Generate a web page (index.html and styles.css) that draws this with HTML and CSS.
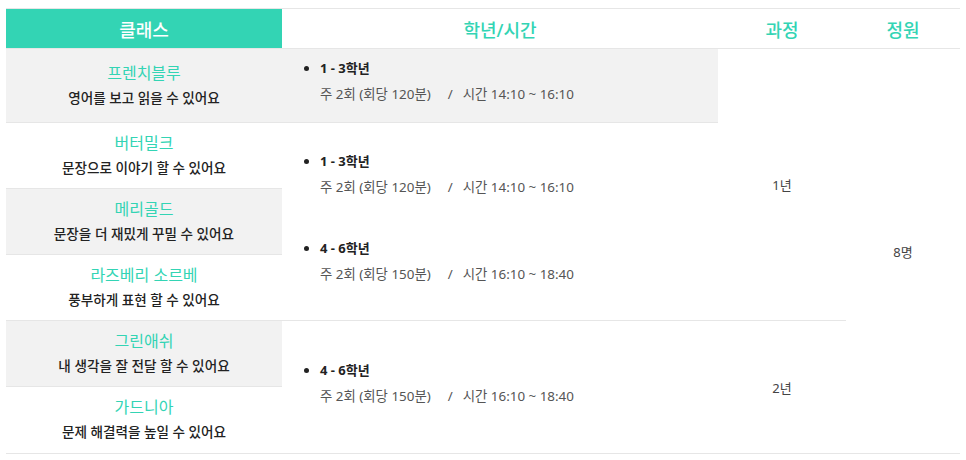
FILE: index.html
```html
<!DOCTYPE html>
<html lang="ko">
<head>
  <meta charset="UTF-8" />
  <title>클래스 안내</title>
  <meta name="viewport" content="width=device-width, initial-scale=1" />
  <link rel="stylesheet" href="styles.css">
</head>
<body>
  <table class="schedule">
    <thead>
      <tr>
        <th class="col-class">클래스</th>
        <th class="col-grade">학년/시간</th>
        <th class="col-course">과정</th>
        <th class="col-seat">정원</th>
      </tr>
    </thead>
    <tbody>
      <tr class="tall">
        <td class="klass shade"><span class="name">프렌치블루</span><span class="desc">영어를 보고 읽을 수 있어요</span></td>
        <td class="grade shade">
          <ul>
            <li><strong>1 - 3학년</strong><span class="time">주 2회 (회당 120분)<span class="sep">/</span>시간 14:10 ~ 16:10</span></li>
          </ul>
        </td>
        <td class="plain" rowspan="4">1년</td>
        <td class="plain" rowspan="6">8명</td>
      </tr>
      <tr>
        <td class="klass"><span class="name">버터밀크</span><span class="desc">문장으로 이야기 할 수 있어요</span></td>
        <td class="grade" rowspan="3">
          <ul>
            <li><strong>1 - 3학년</strong><span class="time">주 2회 (회당 120분)<span class="sep">/</span>시간 14:10 ~ 16:10</span></li>
            <li><strong>4 - 6학년</strong><span class="time">주 2회 (회당 150분)<span class="sep">/</span>시간 16:10 ~ 18:40</span></li>
          </ul>
        </td>
      </tr>
      <tr>
        <td class="klass shade"><span class="name">메리골드</span><span class="desc">문장을 더 재밌게 꾸밀 수 있어요</span></td>
      </tr>
      <tr>
        <td class="klass"><span class="name">라즈베리 소르베</span><span class="desc">풍부하게 표현 할 수 있어요</span></td>
      </tr>
      <tr>
        <td class="klass shade"><span class="name">그린애쉬</span><span class="desc">내 생각을 잘 전달 할 수 있어요</span></td>
        <td class="grade" rowspan="2">
          <ul>
            <li><strong>4 - 6학년</strong><span class="time">주 2회 (회당 150분)<span class="sep">/</span>시간 16:10 ~ 18:40</span></li>
          </ul>
        </td>
        <td class="plain" rowspan="2">2년</td>
      </tr>
      <tr class="last">
        <td class="klass"><span class="name">가드니아</span><span class="desc">문제 해결력을 높일 수 있어요</span></td>
      </tr>
    </tbody>
  </table>
</body>
</html>
```

FILE: styles.css
```css
html,body{margin:0;background:#fff;color:#222;font-family:"Noto Sans","Noto Sans CJK KR",sans-serif}
body{padding:8px 6px}

.schedule{width:954px;border-collapse:collapse;table-layout:fixed}
.schedule th,.schedule td{padding:0;border-bottom:1px solid #e6e6e6;text-align:center;vertical-align:middle}

.schedule thead tr{height:40px}
.schedule th{border-top:1px solid #e6e6e6;font-size:18px;font-weight:500;color:#33d4b4}
.schedule th.col-class{width:276px;background:#33d4b4;color:#fff}
.col-grade{width:436px}
.col-course{width:128px}
.col-seat{width:114px}

.schedule tbody tr{height:66px}
.schedule tbody tr.tall{height:74px}
.schedule tbody tr.last{height:67px}

.shade{background:#f2f2f2}

.klass{padding-bottom:3px !important}
.klass .name{display:block;font-size:16px;line-height:22px;color:#33d4b4}
.klass .desc{display:block;margin-top:5px;font-size:13.6px;font-weight:500;line-height:18px;color:#222}

.grade{text-align:left !important;padding-bottom:9px !important}
.grade ul{margin:0;padding-left:38px}
.grade li{font-size:13px;line-height:26px}
.grade li + li{margin-top:35px}
.grade strong{display:block;font-weight:700;color:#222}
.grade .time{display:block;font-size:13.4px;color:#555}
.grade .sep{margin:0 10px 0 17px}

.plain{font-size:13px;color:#444}
```
